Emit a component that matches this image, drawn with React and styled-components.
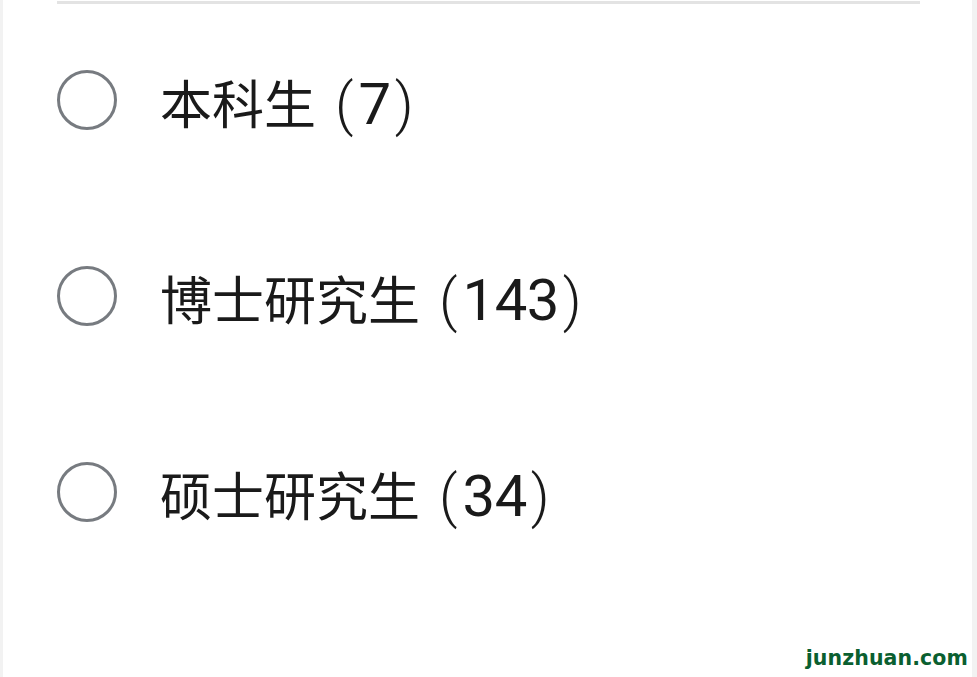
import React, { useState } from 'react';
import styled, { createGlobalStyle } from 'styled-components';

const GlobalStyle = createGlobalStyle`
  html, body {
    margin: 0;
    padding: 0;
    background: #f2f2f2;
  }
  body {
    font-family: Roboto, "Noto Sans CJK SC", sans-serif;
  }
`;

const Page = styled.div`
  height: 677px;
  margin: 0 5px 0 3px;
  background: #ffffff;
  position: relative;
  overflow: hidden;
`;

const Divider = styled.div`
  height: 3px;
  margin: 1px 52px 0 54px;
  background: #e3e3e3;
`;

const OptionList = styled.div`
  display: flex;
  flex-direction: column;
  padding: 66px 0 0 54px;
  gap: 136px;
`;

const Option = styled.label`
  display: flex;
  align-items: center;
  height: 60px;
  cursor: pointer;
`;

const Radio = styled.span`
  box-sizing: border-box;
  width: 60px;
  height: 60px;
  border-radius: 50%;
  border: 3px solid ${props => (props.checked ? '#1989fa' : '#777b80')};
  background: ${props => (props.checked ? '#1989fa' : 'transparent')};
  flex-shrink: 0;
`;

const Label = styled.span`
  display: flex;
  align-items: baseline;
  margin-left: 43px;
  padding-top: 5px;
  font-family: "Noto Sans CJK SC", sans-serif;
  font-size: 52px;
  line-height: 60px;
  color: #1a1a1a;
  white-space: nowrap;
`;

const Paren = styled.span`
  font-family: Roboto, sans-serif;
  font-size: 58px;
  font-weight: 300;
  margin-left: ${props => (props.open ? '19px' : '4px')};
  margin-right: ${props => (props.open ? '5px' : '0')};
`;

const Count = styled.span`
  font-family: Roboto, sans-serif;
  font-size: 58px;
  letter-spacing: -0.5px;
`;

const Watermark = styled.div`
  position: absolute;
  right: 4px;
  bottom: 7px;
  font-family: "DejaVu Sans", "Liberation Sans", sans-serif;
  font-weight: 700;
  font-size: 20.5px;
  color: #0a5f30;
  letter-spacing: 0.1px;
`;

const options = [
  { id: 'bk', name: '本科生', count: 7 },
  { id: 'bs', name: '博士研究生', count: 143 },
  { id: 'ss', name: '硕士研究生', count: 34 },
];

const App = () => {
  const [selected, setSelected] = useState(null);

  return (
    <>
      <GlobalStyle />
      <Page>
        <Divider />
        <OptionList>
          {options.map(opt => (
            <Option key={opt.id} onClick={() => setSelected(opt.id)}>
              <Radio checked={selected === opt.id} />
              <Label>
                {opt.name}
                <Paren open>(</Paren>
                <Count>{opt.count}</Count>
                <Paren>)</Paren>
              </Label>
            </Option>
          ))}
        </OptionList>
        <Watermark>junzhuan.com</Watermark>
      </Page>
    </>
  );
};

export default App;
